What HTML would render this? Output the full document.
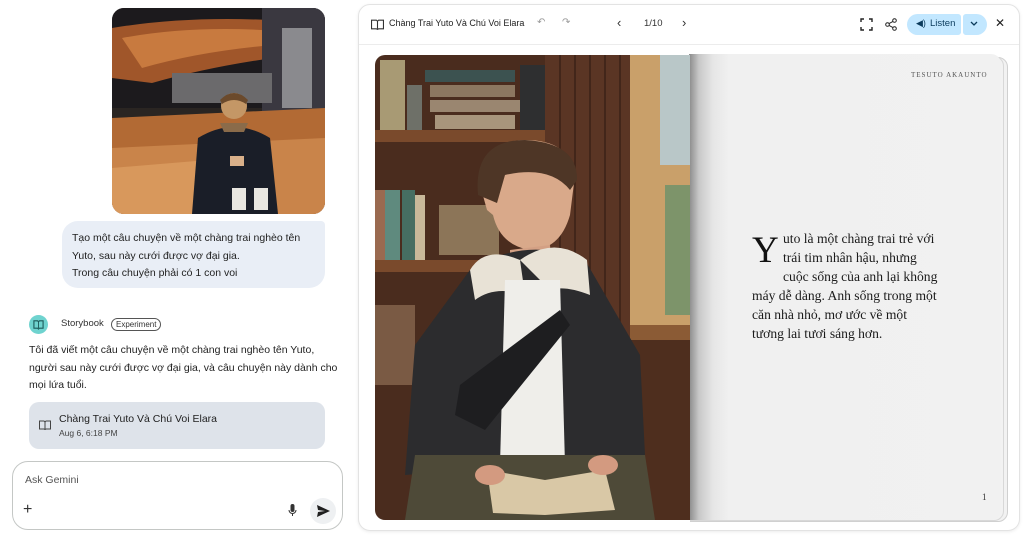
<!DOCTYPE html>
<html><head><meta charset="utf-8"><style>
*{margin:0;padding:0;box-sizing:border-box}
body{width:1024px;height:541px;background:#fff;font-family:"Liberation Sans",sans-serif;position:relative;overflow:hidden;color:#1f1f1f}
.abs{position:absolute}
.t{font-size:11px;color:#1f1f1f}
</style></head><body>
<!-- photo -->
<div class="abs" style="left:112px;top:8px;width:213px;height:206px;border-radius:12px;overflow:hidden">
<svg width="213" height="206" viewBox="0 0 213 206">
<rect width="213" height="206" fill="#2a2522"/>
<rect y="0" width="213" height="100" fill="#1c1a1d"/>
<path d="M0 20 Q90 5 200 15 L200 45 Q110 55 40 75 L0 70Z" fill="#a0562a"/>
<path d="M10 30 Q90 15 190 25 L190 35 Q100 40 30 60Z" fill="#c87a3f"/>
<rect x="150" y="0" width="63" height="110" fill="#3a3840"/>
<rect x="170" y="20" width="30" height="80" fill="#8a8a8e"/>
<rect x="60" y="65" width="100" height="30" fill="#6b6a6c"/>
<path d="M0 110 L213 100 L213 206 L0 206Z" fill="#b26a34"/>
<path d="M0 140 L213 130 L213 206 L0 206Z" fill="#c9844a"/>
<path d="M0 160 L120 150 L100 206 L0 206Z" fill="#d8985c"/>
<circle cx="122" cy="98" r="13" fill="#c49766"/>
<path d="M108 92 Q122 78 136 92 L134 96 Q122 88 110 96Z" fill="#6b4a2c"/>
<path d="M86 130 Q122 108 158 130 L166 206 L80 206Z" fill="#1a1e28"/>
<path d="M108 115 L136 115 L132 124 L112 124Z" fill="#8a6b4a"/>
<rect x="118" y="148" width="14" height="10" fill="#d9b08a"/>
<rect x="120" y="180" width="14" height="22" fill="#e8e6e0"/>
<rect x="142" y="180" width="14" height="22" fill="#e8e6e0"/>
</svg></div>
<!-- user bubble -->
<div class="abs" style="left:62px;top:221px;width:263px;height:67px;background:#e9eef6;border-radius:16px 4px 16px 16px;padding:9px 10px 0 10px;font-size:10.5px;line-height:17.5px;color:#1f1f1f">Tạo một câu chuyện về một chàng trai nghèo tên Yuto, sau này cưới được vợ đại gia.<br>Trong câu chuyện phải có 1 con voi</div>
<!-- storybook -->
<div class="abs" style="left:29px;top:315px;width:19px;height:19px;border-radius:50%;background:#6fd3cf"></div>
<svg class="abs" style="left:33px;top:319px" width="11" height="11" viewBox="0 0 12 12"><path d="M1 2h4l1 1 1-1h4v8H7l-1 1-1-1H1Z" fill="none" stroke="#1d5b5a" stroke-width="1.2"/><path d="M6 3v7" stroke="#1d5b5a" stroke-width="1"/></svg>
<div class="abs t" style="left:61px;top:318px;font-size:9.5px;color:#333">Storybook</div>
<div class="abs" style="left:111px;top:318px;border:1px solid #555;border-radius:7px;font-size:8px;padding:0 4px;line-height:11px;color:#333">Experiment</div>
<div class="abs" style="left:29px;top:342px;width:310px;font-size:10.5px;line-height:17.5px">Tôi đã viết một câu chuyện về một chàng trai nghèo tên Yuto,<br>người sau này cưới được vợ đại gia, và câu chuyện này dành cho<br>mọi lứa tuổi.</div>
<div class="abs" style="left:29px;top:402px;width:296px;height:47px;background:#dee3ea;border-radius:10px"></div>
<svg class="abs" style="left:39px;top:420px" width="12" height="10" viewBox="0 0 12 10"><path d="M.5 1h4.5l1 1 1-1h4.5v8H7l-1 .5-1-.5H.5Z" fill="none" stroke="#444" stroke-width="1"/><path d="M6 2v7" stroke="#444"/></svg>
<div class="abs" style="left:59px;top:413px;font-size:10.5px;color:#1f1f1f">Chàng Trai Yuto Và Chú Voi Elara</div>
<div class="abs" style="left:59px;top:428px;font-size:8.5px;color:#444">Aug 6, 6:18 PM</div>
<!-- input -->
<div class="abs" style="left:12px;top:461px;width:331px;height:69px;border:1px solid #c4c7c5;border-radius:16px"></div>
<div class="abs" style="left:25px;top:474px;font-size:10.5px;color:#555">Ask Gemini</div>
<div class="abs" style="left:23px;top:501px;font-size:16px;color:#333;line-height:18px">+</div>
<svg class="abs" style="left:288px;top:504px" width="9" height="13" viewBox="0 0 9 13"><rect x="2.5" y="0" width="4" height="8" rx="2" fill="#333"/><path d="M1 6a3.5 3.5 0 007 0M4.5 10v2" stroke="#333" fill="none"/></svg>
<div class="abs" style="left:310px;top:498px;width:26px;height:26px;border-radius:50%;background:#eef0f2"></div>
<svg class="abs" style="left:317px;top:505px" width="13" height="12" viewBox="0 0 13 12"><path d="M0 0L13 6 0 12 1 7 8 6 1 5Z" fill="#1f1f1f"/></svg>
<!-- right panel -->
<div class="abs" style="left:358px;top:4px;width:662px;height:527px;border:1px solid #e3e3e3;border-radius:12px;box-shadow:0 1px 3px rgba(0,0,0,.08)"></div>
<div class="abs" style="left:359px;top:44px;width:660px;height:1px;background:#ececec"></div>
<svg class="abs" style="left:371px;top:19px" width="13" height="11" viewBox="0 0 12 10"><path d="M.5 1h4.5l1 1 1-1h4.5v8H7l-1 .5-1-.5H.5Z" fill="none" stroke="#333" stroke-width="1"/><path d="M6 2v7" stroke="#333"/></svg>
<div class="abs" style="left:389px;top:18px;font-size:9px;color:#222">Chàng Trai Yuto Và Chú Voi Elara</div>
<div class="abs" style="left:537px;top:17px;font-size:10px;color:#999">↶</div>
<div class="abs" style="left:562px;top:17px;font-size:10px;color:#999">↷</div>
<div class="abs" style="left:617px;top:15px;font-size:13px;color:#333">‹</div>
<div class="abs" style="left:644px;top:18px;font-size:9.5px;color:#333">1/10</div>
<div class="abs" style="left:682px;top:15px;font-size:13px;color:#333">›</div>
<svg class="abs" style="left:860px;top:18px" width="13" height="13" viewBox="0 0 13 13"><path d="M1 4V1h3M9 1h3v3M12 9v3H9M4 12H1V9" fill="none" stroke="#222" stroke-width="1.4"/></svg>
<svg class="abs" style="left:885px;top:18px" width="12" height="13" viewBox="0 0 12 13"><circle cx="9.5" cy="2.5" r="1.8" fill="none" stroke="#222"/><circle cx="2.5" cy="6.5" r="1.8" fill="none" stroke="#222"/><circle cx="9.5" cy="10.5" r="1.8" fill="none" stroke="#222"/><path d="M4 5.6l4-2.2M4 7.4l4 2.2" stroke="#222"/></svg>
<div class="abs" style="left:907px;top:14px;width:54px;height:21px;background:#c2e7ff;border-radius:11px 3px 3px 11px"></div>
<div class="abs" style="left:963px;top:14px;width:24px;height:21px;background:#c2e7ff;border-radius:3px 11px 11px 3px"></div>
<div class="abs" style="left:916px;top:18px;font-size:9px;color:#0b3b5c">◀)</div>
<div class="abs" style="left:930px;top:18px;font-size:9.5px;color:#0b3b5c">Listen</div>
<svg class="abs" style="left:970px;top:21px" width="8" height="6" viewBox="0 0 8 6"><path d="M1 1l3 3 3-3" fill="none" stroke="#0b3b5c" stroke-width="1.3"/></svg>
<div class="abs" style="left:995px;top:16px;font-size:12px;color:#222">✕</div>
<!-- book pages stack -->
<div class="abs" style="left:690px;top:57px;width:318px;height:465px;border:1px solid #d0d0d0;border-radius:0 10px 10px 0;background:#f2f2f2"></div>
<div class="abs" style="left:690px;top:56px;width:314px;height:465px;border:1px solid #d8d8d8;border-radius:0 10px 10px 0;background:#f2f2f2"></div>
<div class="abs" style="left:689px;top:54px;width:312px;height:466px;border-radius:0 10px 10px 0;background:linear-gradient(90deg,#8a8a8a 0,#c8c8c8 10px,#e6e6e6 24px,#f0f0f0 40px,#f1f1f1)"></div>
<div class="abs" style="left:911px;top:71px;font-family:'Liberation Serif',serif;font-size:7px;letter-spacing:1px;color:#555">TESUTO AKAUNTO</div>
<div class="abs" style="left:752px;top:232px;font-family:'Liberation Serif',serif;font-size:37px;line-height:37px;color:#111">Y</div>
<div class="abs" style="left:752px;top:230px;width:230px;white-space:nowrap;font-family:'Liberation Serif',serif;font-size:13.6px;line-height:18.9px;color:#1a1a1a">
<div style="padding-left:31px">uto là một chàng trai trẻ với</div>
<div style="padding-left:31px">trái tim nhân hậu, nhưng</div>
<div style="padding-left:31px">cuộc sống của anh lại không</div>
<div>máy dễ dàng. Anh sống trong một</div>
<div>căn nhà nhỏ, mơ ước về một</div>
<div>tương lai tươi sáng hơn.</div>
</div>
<div class="abs" style="left:982px;top:492px;font-family:'Liberation Serif',serif;font-size:9px;color:#333">1</div>
<!-- illustration -->
<div class="abs" style="left:375px;top:55px;width:315px;height:465px;border-radius:10px 0 0 10px;overflow:hidden">
<svg width="315" height="465" viewBox="0 0 315 465">
<rect width="315" height="465" fill="#4a2c1e"/>
<rect x="170" width="85" height="465" fill="#5a3524"/>
<g stroke="#3a2116" stroke-width="1.5"><path d="M185 0V465M200 0V465M215 0V465M230 0V465M245 0V465"/></g>
<rect x="255" width="60" height="300" fill="#c9a06a"/>
<rect x="285" y="0" width="30" height="110" fill="#b9c7c8"/>
<rect x="290" y="130" width="25" height="130" fill="#7d946a"/>
<rect x="255" y="270" width="60" height="15" fill="#8b5b35"/>
<rect x="255" y="285" width="60" height="180" fill="#4e2e1e"/>
<rect x="0" y="75" width="170" height="12" fill="#7a4a2c"/>
<rect x="0" y="205" width="110" height="12" fill="#7a4a2c"/>
<rect x="5" y="5" width="25" height="70" fill="#a89a74"/>
<rect x="32" y="30" width="15" height="45" fill="#6e7068"/>
<rect x="50" y="15" width="90" height="12" fill="#3c5250"/>
<rect x="55" y="30" width="85" height="12" fill="#8c7760"/>
<rect x="55" y="45" width="90" height="12" fill="#9a8670"/>
<rect x="60" y="60" width="80" height="14" fill="#a8957c"/>
<rect x="145" y="10" width="25" height="65" fill="#2e2f30"/>
<rect x="0" y="135" width="10" height="70" fill="#9a6a50"/>
<rect x="10" y="135" width="15" height="70" fill="#5f8a7e"/>
<rect x="27" y="135" width="13" height="70" fill="#466e62"/>
<rect x="40" y="140" width="10" height="65" fill="#c8b99a"/>
<rect x="64" y="150" width="60" height="50" fill="#8c7558"/>
<rect x="0" y="250" width="40" height="80" fill="#7a5a44"/>
<path d="M105 130 Q110 85 150 85 Q195 85 200 120 L195 160 Q185 195 155 195 Q125 190 118 160 L112 155Z" fill="#d9a98a"/>
<path d="M103 140 Q98 85 150 85 Q203 88 202 125 L195 135 Q175 110 130 120 L122 148 Z" fill="#4e3626"/>
<path d="M135 195 L175 190 L178 230 L135 232Z" fill="#d3a084"/>
<path d="M95 215 Q150 180 210 205 L265 300 L270 400 L30 420 L40 290 Z" fill="#2c2c2e"/>
<path d="M95 215 Q110 190 145 205 L150 240 Q120 230 100 245Z" fill="#e8e2d6"/>
<path d="M145 205 Q180 180 212 205 L215 240 Q190 230 175 235Z" fill="#e8e2d6"/>
<path d="M130 225 L185 225 L190 410 L125 410Z" fill="#efeeea"/>
<path d="M85 330 L185 255 L195 270 L110 375 L80 360Z" fill="#1e1e20"/>
<path d="M40 400 L270 400 L280 465 L30 465Z" fill="#4e4a38"/>
<path d="M112 415 L170 425 L230 415 L240 455 L170 460 L118 458Z" fill="#d9c8a6"/>
<ellipse cx="115" cy="420" rx="15" ry="10" fill="#d39a80"/>
<ellipse cx="228" cy="410" rx="15" ry="10" fill="#d39a80"/>
</svg></div>
</body></html>
